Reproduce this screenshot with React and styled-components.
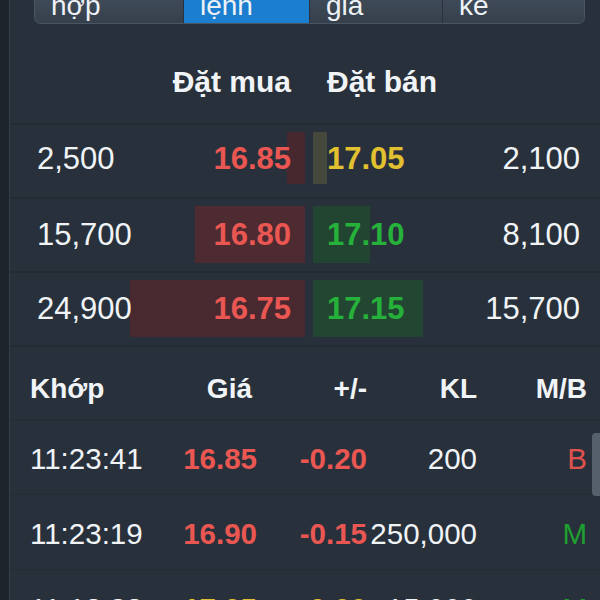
import React from 'react';
import styled, { createGlobalStyle } from 'styled-components';

const GlobalStyle = createGlobalStyle`
  html, body {
    margin: 0;
    padding: 0;
    background: #28313b;
  }
  body {
    font-family: "Liberation Sans", Arial, sans-serif;
    color: #f1f4f7;
    overflow: hidden;
  }
`;

const colors = {
  red: '#ea5752',
  yellow: '#e2c131',
  green: '#25b13a',
  white: '#f1f4f7',
};

//Screen
const Screen = styled.div`
  display: flex;
  width: 600px;
  height: 600px;
  overflow: hidden;
  background: #28313b;
`;

const Strip = styled.div`
  width: 9px;
  flex-shrink: 0;
  background: #1d242b;
  border-right: 1px solid #343e49;
`;

const Main = styled.div`
  flex: 1;
  min-width: 0;
`;

//Tabs
const Tabs = styled.div`
  display: grid;
  grid-template-columns: 148px 125px 132px 1fr;
  height: 23px;
  margin: 0 15px 0 24px;
  border: 1px solid #4a5562;
  border-top: none;
  border-radius: 0 0 7px 7px;
  overflow: hidden;
  background: #2a333d;
  gap: 1px;
`;

const Tab = styled.div`
  padding-left: 16px;
  font-size: 28px;
  line-height: 12px;
  color: #eef2f6;
  overflow: hidden;
  background: ${p => (p.$active ? '#1b7ecf' : 'linear-gradient(#3f4a58, #36404c)')};
`;

//Order book
const BookHeader = styled.div`
  display: flex;
  gap: 8px;
  height: 99px;
  align-items: flex-end;
  padding-bottom: 26px;
  box-sizing: border-box;
  font-size: 30px;
  line-height: 30px;
  font-weight: 700;
`;

const BookRow = styled.div`
  display: flex;
  gap: 8px;
  height: 74px;
  box-sizing: border-box;
  border-top: 2px solid #222a32;
  padding-bottom: ${p => (p.$first ? 5 : 0)}px;
`;

const Side = styled.div`
  position: relative;
  display: flex;
  align-items: center;
  justify-content: space-between;
  flex: ${p => (p.$buy ? '0 0 295px' : '1')};
  padding: ${p => (p.$buy ? '0 14px 0 27px' : '0 20px 0 14px')};
  box-sizing: border-box;
`;

const HeadLabel = styled.div`
  margin-left: ${p => (p.$buy ? 'auto' : '0')};
`;

const Bar = styled.div`
  position: absolute;
  top: 7px;
  bottom: 8px;
  ${p => (p.$buy ? 'right: 0;' : 'left: 0;')}
  background: ${p => p.$color};
`;

const Num = styled.span`
  position: relative;
  font-size: 31px;
  line-height: 30px;
  font-weight: ${p => (p.$bold ? 700 : 400)};
  color: ${p => p.$color || colors.white};
`;

//Trades
const TradeGrid = styled.div`
  display: grid;
  grid-template-columns: 150px 77px 110px 110px 110px;
  padding: 0 13px 0 20px;
  box-sizing: border-box;
`;

const TradeHeader = styled(TradeGrid)`
  height: 74px;
  align-items: end;
  padding-bottom: 16px;
  border-top: 2px solid #222a32;
  font-size: 28px;
  line-height: 28px;
  font-weight: 700;
`;

const TradeList = styled.div`
  position: relative;
`;

const TradeRow = styled(TradeGrid)`
  height: 75px;
  align-items: center;
  padding-top: 3px;
  border-top: 1px solid #232b33;
  font-size: 29.5px;
  line-height: 30px;
`;

const Cell = styled.div`
  text-align: ${p => (p.$left ? 'left' : 'right')};
  padding-right: ${p => p.$pad || 0}px;
  white-space: nowrap;
  font-weight: ${p => (p.$bold ? 700 : 'inherit')};
  color: ${p => p.$color || 'inherit'};
`;

const Thumb = styled.div`
  position: absolute;
  right: 0;
  top: 14px;
  width: 8px;
  height: 63px;
  border-radius: 4px 0 0 4px;
  background: #56606c;
`;

const book = [
  { bidVol: '2,500', bid: '16.85', bidBar: 18, bidBg: '#47282e', ask: '17.05', askColor: colors.yellow, askBar: 14, askBg: '#46483d', askVol: '2,100' },
  { bidVol: '15,700', bid: '16.80', bidBar: 110, bidBg: '#4e2a31', ask: '17.10', askColor: colors.green, askBar: 57, askBg: '#224532', askVol: '8,100' },
  { bidVol: '24,900', bid: '16.75', bidBar: 175, bidBg: '#492930', ask: '17.15', askColor: colors.green, askBar: 110, askBg: '#234632', askVol: '15,700' },
];

const trades = [
  { time: '11:23:41', price: '16.85', change: '-0.20', color: colors.red, vol: '200', side: 'B', sideColor: '#e0524d' },
  { time: '11:23:19', price: '16.90', change: '-0.15', color: colors.red, vol: '250,000', side: 'M', sideColor: '#1f9f2f' },
  { time: '11:18:38', price: '17.05', change: '0.00', color: colors.yellow, vol: '15,000', side: 'M', sideColor: '#1f9f2f' },
];

export default function App() {
  return (
    <Screen>
      <GlobalStyle />
      <Strip />
      <Main>
        <Tabs>
          <Tab>hợp</Tab>
          <Tab $active>lệnh</Tab>
          <Tab>giá</Tab>
          <Tab>kê</Tab>
        </Tabs>

        <BookHeader>
          <Side $buy>
            <HeadLabel $buy>Đặt mua</HeadLabel>
          </Side>
          <Side>
            <HeadLabel>Đặt bán</HeadLabel>
          </Side>
        </BookHeader>

        {book.map((r, i) => (
          <BookRow key={r.bid} $first={i === 0}>
            <Side $buy>
              <Bar $buy $color={r.bidBg} style={{ width: r.bidBar }} />
              <Num>{r.bidVol}</Num>
              <Num $bold $color={colors.red}>{r.bid}</Num>
            </Side>
            <Side>
              <Bar $color={r.askBg} style={{ width: r.askBar }} />
              <Num $bold $color={r.askColor}>{r.ask}</Num>
              <Num>{r.askVol}</Num>
            </Side>
          </BookRow>
        ))}

        <TradeHeader>
          <Cell $left>Khớp</Cell>
          <Cell $pad={5}>Giá</Cell>
          <Cell>+/-</Cell>
          <Cell>KL</Cell>
          <Cell>M/B</Cell>
        </TradeHeader>

        <TradeList>
          {trades.map(t => (
            <TradeRow key={t.time}>
              <Cell $left>{t.time}</Cell>
              <Cell $bold $color={t.color}>{t.price}</Cell>
              <Cell $bold $color={t.color}>{t.change}</Cell>
              <Cell>{t.vol}</Cell>
              <Cell $color={t.sideColor}>{t.side}</Cell>
            </TradeRow>
          ))}
          <Thumb />
        </TradeList>
      </Main>
    </Screen>
  );
}
